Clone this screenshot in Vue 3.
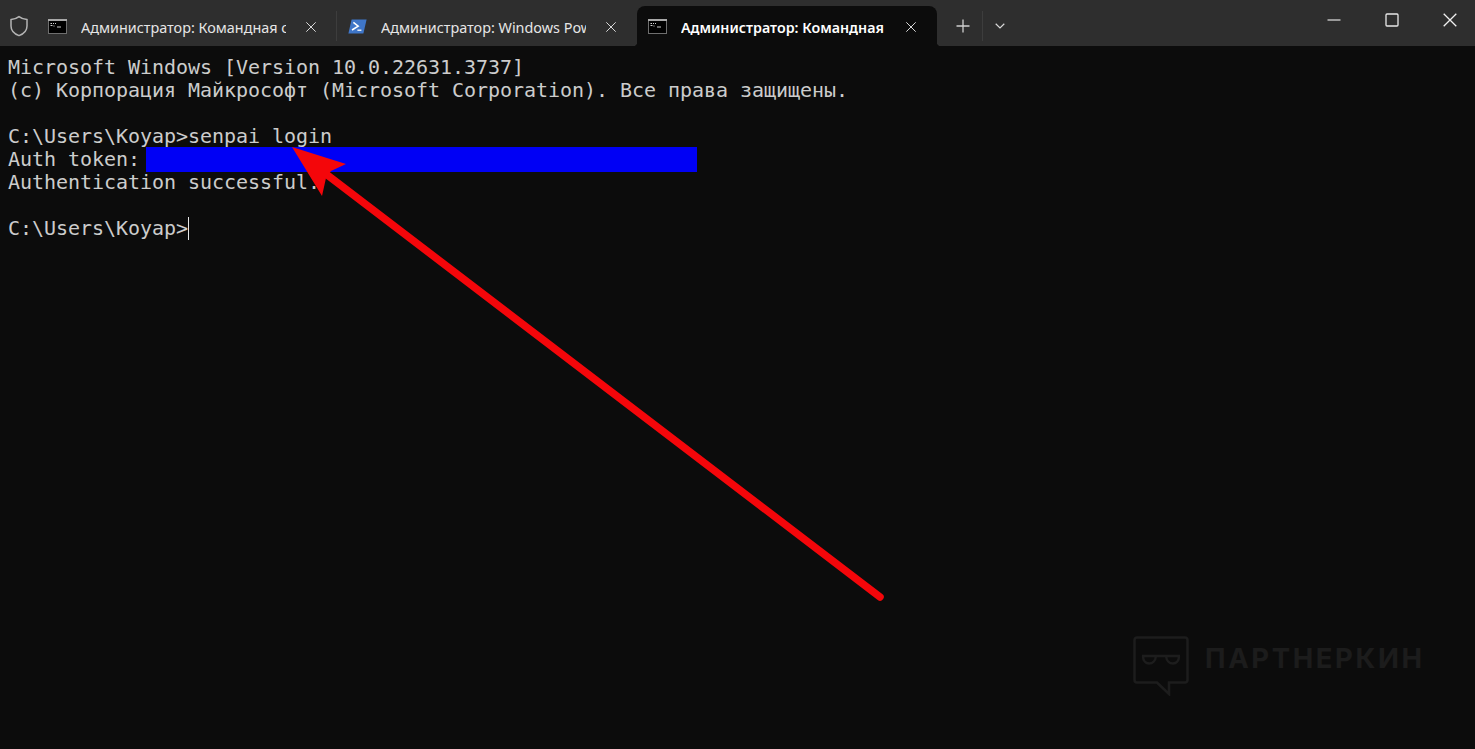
<script setup>
const tabs = [
  { id: 1, title: 'Администратор: Командная строка', icon: 'cmd', active: false },
  { id: 2, title: 'Администратор: Windows PowerShell', icon: 'ps', active: false },
  { id: 3, title: 'Администратор: Командная строка', icon: 'cmd', active: true },
]
const lines = [
  'Microsoft Windows [Version 10.0.22631.3737]',
  '(c) Корпорация Майкрософт (Microsoft Corporation). Все права защищены.',
  '',
  'C:\\Users\\Коуар>senpai login',
  'Auth token: ',
  'Authentication successful.',
  '',
]
</script>

<template>
  <div class="window">
    <header class="titlebar">
      <div class="shield">
        <svg width="20" height="22" viewBox="0 0 20 22" fill="none">
          <path d="M10 1.600 C12.600 3.600 15.200 4.400 18 4.600 V11 C18 15.600 15 18.800 10 20.600 C5 18.800 2 15.600 2 11 V4.600 C4.800 4.400 7.400 3.600 10 1.600 Z" stroke="#b4b4b4" stroke-width="1.500" />
        </svg>
      </div>
      <div v-for="tab in tabs" :key="tab.id" class="tab" :class="{ active: tab.active }">
        <svg v-if="tab.icon === 'cmd'" class="tab-icon" width="19" height="15" viewBox="0 0 19 15">
          <rect x="0.500" y="0.500" width="18" height="14" fill="#000" stroke="#6e6e6e" stroke-width="1" />
          <rect width="19" height="2" fill="#a8a8a8" />
          <path d="M2.500 4.500h1.500M5 4.500h1M7 4.500h1M2.500 6.500h2M5.500 7h1M9 8h4" stroke="#cfcfcf" stroke-width="1" />
        </svg>
        <svg v-else class="tab-icon" width="19" height="15" viewBox="0 0 19 15">
          <path d="M3.600 0.500 H18.600 L15.400 14.500 H0.400 Z" fill="#3f76c8" />
          <path d="M5.400 3.400 L10.200 7.200 L4 11" stroke="#fff" stroke-width="1.500" fill="none" />
          <path d="M9.400 11.200 H13.400" stroke="#fff" stroke-width="1.300" />
        </svg>
        <span class="tab-title">{{ tab.title }}</span>
        <svg class="tab-close" width="10" height="10" viewBox="0 0 10 10">
          <path d="M0.300 0.300 L9.700 9.700 M9.700 0.300 L0.300 9.700" stroke="#d8d8d8" stroke-width="1" />
        </svg>
      </div>
      <div class="new-tab">
        <svg width="14" height="14" viewBox="0 0 14 14">
          <path d="M7 0.500 V13.500 M0.500 7 H13.500" stroke="#cfcfcf" stroke-width="1.300" />
        </svg>
      </div>
      <div class="tab-menu">
        <svg width="10" height="6" viewBox="0 0 10 6" fill="none">
          <path d="M0.700 0.800 L5 5 L9.300 0.800" stroke="#d8d8d8" stroke-width="1.200" />
        </svg>
      </div>
      <div class="controls">
        <svg width="14" height="14" viewBox="0 0 14 14">
          <path d="M0.500 7 H13.500" stroke="#d4d4d4" stroke-width="1.300" />
        </svg>
        <svg width="14" height="14" viewBox="0 0 14 14" fill="none">
          <rect x="1" y="1" width="12" height="12" rx="1" stroke="#e8e8e8" stroke-width="1.300" />
        </svg>
        <svg width="14" height="14" viewBox="0 0 14 14">
          <path d="M0.700 0.700 L13.300 13.300 M13.300 0.700 L0.700 13.300" stroke="#f0f0f0" stroke-width="1.300" />
        </svg>
      </div>
    </header>

    <main class="terminal">
      <div v-for="(line, i) in lines" :key="i" class="line">{{ line }}</div>
      <div class="line">C:\Users\Коуар&gt;<span class="cursor"></span></div>
    </main>

    <svg class="markup" width="1475" height="749" viewBox="0 0 1475 749">
      <rect x="146" y="147" width="551" height="25" fill="#0000f5" />
      <path d="M326 174 L880 597" stroke="#f4060a" stroke-width="7.500" stroke-linecap="round" />
      <path d="M292 147 L346 164 L331 171 L326 178 L322 196 Z" fill="#f4060a" />
    </svg>

    <div class="watermark">
      <svg width="56" height="60" viewBox="0 0 56 60" fill="none">
        <path d="M4 1.500 H52 A2.500 2.500 0 0 1 54.500 4 V44 A2.500 2.500 0 0 1 52 46.500 H36 V58 L24 46.500 H4 A2.500 2.500 0 0 1 1.500 44 V4 A2.500 2.500 0 0 1 4 1.500 Z" stroke="#1d1d1d" stroke-width="2.500" />
        <path d="M9 20 H47 M10 20 C10 30 22 30 23 20 M33 20 C34 30 46 30 46 20" stroke="#1d1d1d" stroke-width="2.500" />
      </svg>
      <span class="wm-text">ПАРТНЕРКИН</span>
    </div>
  </div>
</template>

<style scoped>
.window {
  position: relative;
  width: 1475px;
  height: 749px;
  overflow: hidden;
  display: flex;
  flex-direction: column;
  background: #0c0c0c;
}
.titlebar {
  height: 46px;
  flex: none;
  display: flex;
  align-items: flex-end;
  background: #2e2e2e;
}
.shield {
  width: 37px;
  height: 40px;
  flex: none;
  display: flex;
  align-items: center;
  justify-content: center;
  box-sizing: border-box;
}
.tab {
  position: relative;
  width: 300px;
  height: 40px;
  flex: none;
  box-sizing: border-box;
  padding: 0 21px 0 11px;
  display: flex;
  align-items: center;
  font-family: "Noto Sans", sans-serif;
  font-size: 14.400px;
  color: #e6e6e6;
}
.tab:not(.active)::after {
  content: "";
  position: absolute;
  right: 0;
  top: 5px;
  height: 30px;
  width: 1px;
  background: #3d3d3d;
}
.tab:nth-child(3)::after {
  display: none;
}
.tab.active {
  background: #0c0c0c;
  border-radius: 8px 8px 0 0;
  color: #fff;
  font-size: 14.250px;
  font-weight: 600;
}
.tab.active::before,
.tab.active::after {
  content: "";
  position: absolute;
  bottom: 0;
  width: 4px;
  height: 4px;
}
.tab.active::before {
  left: -4px;
  background: radial-gradient(circle at 0 0, transparent 4px, #0c0c0c 4.500px);
}
.tab.active::after {
  right: -4px;
  background: radial-gradient(circle at 100% 0, transparent 4px, #0c0c0c 4.500px);
}
.tab-icon {
  flex: none;
  margin-right: 14px;
}
.tab-title {
  width: 205px;
  flex: none;
  overflow: hidden;
  white-space: nowrap;
  padding-top: 2px;
}
.tab-close {
  flex: none;
  margin-left: auto;
  margin-top: 1px;
}
.new-tab {
  width: 46px;
  height: 40px;
  flex: none;
  display: flex;
  align-items: center;
  justify-content: center;
  box-sizing: border-box;
  padding-left: 6px;
  position: relative;
}
.new-tab::after {
  content: "";
  position: absolute;
  right: 0;
  top: 5px;
  height: 30px;
  width: 1px;
  background: #3d3d3d;
}
.tab-menu {
  width: 34px;
  height: 40px;
  flex: none;
  display: flex;
  align-items: center;
  justify-content: center;
}
.controls {
  margin-left: auto;
  height: 46px;
  padding-right: 18px;
  display: flex;
  align-items: center;
  gap: 44px;
  padding-bottom: 6px;
  box-sizing: border-box;
}
.terminal {
  flex: 1;
  padding: 10px 8px;
  font-family: "DejaVu Sans Mono", monospace;
  font-size: 20px;
  letter-spacing: -0.040px;
  line-height: 23px;
  color: #cccccc;
}
.line {
  height: 23px;
  white-space: pre;
}
.cursor {
  display: inline-block;
  width: 1px;
  height: 23px;
  background: #e8e8e8;
  vertical-align: top;
}
.markup {
  position: absolute;
  left: 0;
  top: 0;
  pointer-events: none;
}
.watermark {
  position: absolute;
  left: 1133px;
  top: 636px;
  display: flex;
  align-items: flex-start;
  gap: 16px;
}
.wm-text {
  font-family: "Inter", sans-serif;
  font-weight: 700;
  font-size: 27.500px;
  line-height: 44px;
  letter-spacing: 2.600px;
  color: #1c1c1c;
}
</style>
